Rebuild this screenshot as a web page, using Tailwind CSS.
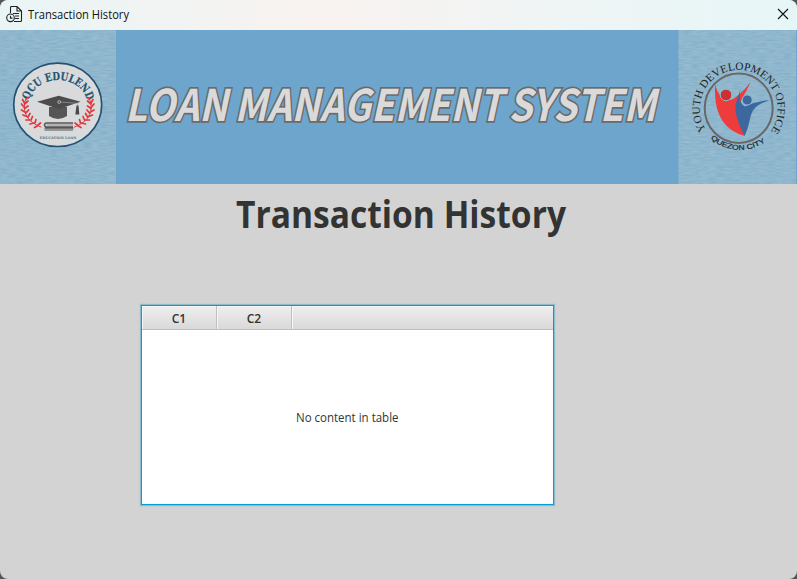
<!DOCTYPE html>
<html lang="en">
<head>
<meta charset="utf-8">
<title>Transaction History</title>
<script src="https://cdn.jsdelivr.net/npm/@tailwindcss/browser@4"></script>
</head>
<body class="bg-[#555]">
<main class="flex h-[579px] w-[797px] flex-col overflow-hidden rounded-lg bg-[#d3d3d3] font-['Open_Sans',sans-serif] text-[#333]">
  <header class="flex h-[30px] shrink-0 items-center bg-linear-to-r from-[#e9f5f5] via-[#f8f2f0] via-40% to-[#e6f6f8] pl-[6px] pr-[8px]">
    <svg class="-mt-px size-[17px] shrink-0" viewBox="0 0 17 17" fill="none" stroke="#222" stroke-width="1.1">
      <path d="M4.500 7V1.500q0-1 1-1H11l4.500 4.500V14.500q0 1-1 1H8M11 .5V5h4.500M7 7.500h6M9 10h4M9 12.500h4"/>
      <circle cx="4.500" cy="11.800" r="3.800"/><path d="M4.500 9.800v2.300h2"/>
    </svg>
    <svg class="ml-[5px] h-[30px] w-[110px]" viewBox="0 0 110 30"><text x="0" y="19" font-size="12" fill="#111" textLength="101" lengthAdjust="spacingAndGlyphs">Transaction History</text></svg>
    <svg class="ml-auto -mt-[2px] size-[12px]" viewBox="0 0 12 12" stroke="#111" stroke-width="1.100"><path d="M1 1l10 10M11 1L1 11"/></svg>
  </header>
  <svg class="h-[154px] w-[797px] shrink-0" viewBox="0 30 797 154">
    <defs>
      <filter id="paper" x="0" y="0" width="100%" height="100%" color-interpolation-filters="sRGB">
        <feTurbulence type="fractalNoise" baseFrequency="0.12 0.6" numOctaves="1" seed="4"/>
        <feColorMatrix values=".14 0 0 0 .49  .09 0 0 0 .67  .07 0 0 0 .77  0 0 0 0 1"/>
      </filter>
      <path id="leftArc" d="M28.500 105a29.500 25 0 0 1 59 0"/>
      <path id="rightArc" d="M707.500 132.200A39 39 0 1 1 769.900 132.200"/>
      <path id="rightLow" d="M704 131A43.500 43 0 0 0 776 131"/>
      <g id="laurel" fill="none" stroke="#e0383f" stroke-width="1.700" stroke-linecap="round">
        <path stroke-width="1" d="M26 99C21 113 28 122 41 127"/>
        <path d="M26 99l2.300-1.500M24.500 103l-2-3.500M24.500 104l3.500-3M24 107l-2.500-3M24.500 108.500l3.500-2.500M25 112l-3.500-2M26 113l2.500-3M27 116.500l-4-1.500M28 117l2-3.500M30 120l-4 0M31 120l1.500-3.500M34 123l-4 1M35 123l1-3.500M38 125.500l-3.500 2M38 125l2.500-2"/>
      </g>
    </defs>
    <rect y="30" width="797" height="154" fill="#90b7ce"/>
    <rect y="30" width="797" height="154" filter="url(#paper)"/>
    <rect x="116" y="30" width="562.500" height="154" fill="#6da5cc"/>
    <rect x="796" y="30" width="1" height="154" fill="#6da5cc"/>

    <ellipse cx="57.700" cy="104.800" rx="44" ry="41.700" fill="#d9dadc" stroke="#235273" stroke-width="1.700"/>
    <text font-family="DejaVu Serif, serif" font-weight="700" font-size="11" fill="#205675" stroke="#205675" stroke-width=".2"><textPath href="#leftArc" startOffset="5" textLength="76" lengthAdjust="spacingAndGlyphs">QCU EDULEND</textPath></text>
    <use href="#laurel"/>
    <use href="#laurel" transform="translate(115.500 0) scale(-1 1)"/>
    <path d="M49 107v9q9 6 18 0v-9z" fill="#565656"/>
    <path d="M37 101.700l21.700-6 22 6-22 7.200z" fill="#4c4c4c"/>
    <path d="M60 102l17.500 1.300v4" fill="none" stroke="#aaa" stroke-width=".6"/>
    <circle cx="59.200" cy="102" r="1.500" fill="#666" stroke="#bbb" stroke-width=".7"/>
    <path d="M76.500 105.500h2l.8 9h-4z" fill="#484848"/>
    <g fill="#555"><path d="M46 122.300h27v1.500H46q-1.500 1.200 0 2.400h27v1.500H46c-3-1-3-4.500 0-5.400zM44.500 127.500h29v1.200h-29z"/><path d="M44.500 129.500h28.500v1H44.500z"/></g>
    <path d="M47 125h26" stroke="#777" stroke-width=".8"/>
    <text x="39.800" y="138.800" font-family="DejaVu Serif, serif" font-weight="700" font-size="3.300" fill="#477089" textLength="36.500" lengthAdjust="spacingAndGlyphs">EDUCATION LOAN</text>

    <g font-family="Noto Sans CJK SC, sans-serif" font-weight="700" font-style="italic" font-size="43.500" fill="#dadada" stroke="#6a6a6a" stroke-width="3.300" paint-order="stroke">
      <text x="125" y="120.500" textLength="102.500" lengthAdjust="spacingAndGlyphs">LOAN</text>
      <text x="234.500" y="120.500" textLength="268" lengthAdjust="spacingAndGlyphs">MANAGEMENT</text>
      <text x="508.500" y="120.500" textLength="147.500" lengthAdjust="spacingAndGlyphs">SYSTEM</text>
    </g>

    <ellipse cx="738.700" cy="108.200" rx="34" ry="34.800" fill="none" stroke="#686868" stroke-width="2"/>
    <text font-family="Liberation Serif, serif" font-size="11" fill="#222"><textPath href="#rightArc" startOffset="3" textLength="168" lengthAdjust="spacingAndGlyphs">YOUTH DEVELOPMENT OFFICE</textPath></text>
    <text font-family="Liberation Sans, sans-serif" font-size="7" fill="#222" stroke="#222" stroke-width=".2"><textPath href="#rightLow" startOffset="10" textLength="59" lengthAdjust="spacingAndGlyphs">QUEZON CITY</textPath></text>
    <path d="M715.200 84.300C718 98 728 104 736 97Q744 91 750.500 82C745 95 738 103 738 112Q739 121 744.700 136C728 131 713 119 715.200 84.300Z" fill="#ee3b3b"/>
    <path d="M740.500 89.500Q738 103 745 106.500Q757 101 769.500 100.300C755 105 752 110 750 119Q748 129 744.700 136Q737 121 735.500 111C735 103 738 97 740.500 89.500Z" fill="#3a689f"/>
    <g stroke="#90b7ce" stroke-width="1"><circle cx="726" cy="95" r="5.800" fill="#cb3032"/><circle cx="747.200" cy="100" r="5" fill="#3a689f"/></g>
  </svg>
  <svg class="h-[60px] w-full shrink-0" viewBox="0 184 797 60"><text x="236" y="228.400" font-size="37" font-weight="700" fill="#333" textLength="330" lengthAdjust="spacingAndGlyphs">Transaction History</text></svg>
  <section class="ml-[141px] mt-[61px] flex h-[200px] w-[413px] flex-col border border-[#039ed3] bg-white text-[12px] shadow-[0_0_1px_1px_#8bbccf]">
    <div class="flex h-[24px] shrink-0 border-b border-[#bebebe] bg-linear-to-b from-[#efefef] to-[#d9d9d9] font-semibold">
      <div class="flex w-[75px] items-center justify-center border-r border-[#c0c0c0] pt-[3px] shadow-[inset_1px_1px_0_#f6f6f6]">C1</div>
      <div class="flex w-[75px] items-center justify-center border-r border-[#c0c0c0] pt-[3px] shadow-[inset_1px_1px_0_#f6f6f6]">C2</div>
      <div class="flex-1 shadow-[inset_1px_1px_0_#f6f6f6]"></div>
    </div>
    <div class="flex flex-1 items-center justify-center"><svg class="h-[20px] w-[109px]" viewBox="0 0 109 20"><text x="3" y="14.500" font-size="12" fill="#333" textLength="102.500" lengthAdjust="spacingAndGlyphs">No content in table</text></svg></div>
  </section>
</main>
</body>
</html>
